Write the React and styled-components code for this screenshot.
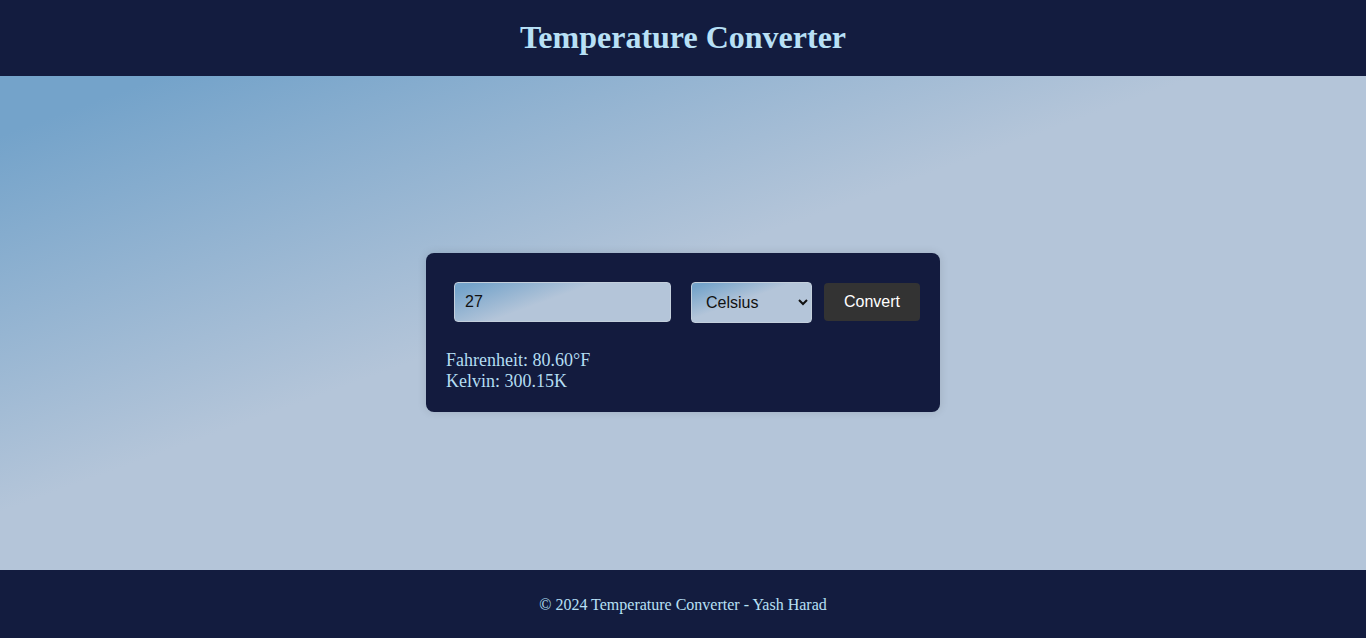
import React, { useState } from "react";
import styled, { createGlobalStyle } from "styled-components";

const bgGradient = "linear-gradient(160deg, #74a3ca 6%, #b4c5d9 44%, #b4c5d9 100%)";

const Global = createGlobalStyle`
  html, body { margin: 0; padding: 0; height: 100%; }
  body { font-family: "Liberation Serif", "Times New Roman", serif; background: #b4c5d9; }
  #root { height: 100%; }
`;

const Page = styled.div`
  display: flex;
  flex-direction: column;
  height: 638px;
`;

const Header = styled.header`
  height: 76px;
  flex: none;
  background: #131c3f;
  display: flex;
  align-items: center;
  justify-content: center;
`;

const Title = styled.h1`
  margin: 0 0 2px;
  font-size: 32px;
  font-weight: bold;
  color: #b8e0f6;
  font-family: "Liberation Serif", "Times New Roman", serif;
`;

const Main = styled.main`
  flex: 1;
  background: ${bgGradient};
  display: flex;
  align-items: center;
  justify-content: center;
  padding-top: 18px;
  box-sizing: border-box;
`;

const Card = styled.div`
  width: 514px;
  box-sizing: border-box;
  background: #131b3e;
  border-radius: 8px;
  padding: 20px;
  box-shadow: 0 0 10px rgba(0, 0, 0, 0.12);
`;

const Row = styled.div`
  display: flex;
  align-items: center;
  padding: 9px 0 7px 8px;
`;

const Field = styled.input`
  width: 217px;
  height: 40px;
  box-sizing: border-box;
  border: 1px solid #c3cfdc;
  border-radius: 4px;
  background: ${bgGradient};
  padding: 0 10px;
  font-family: "Liberation Sans", Arial, sans-serif;
  font-size: 16px;
  color: #111;
  outline: none;
`;

const Select = styled.select`
  margin-left: 20px;
  width: 121px;
  height: 41px;
  box-sizing: border-box;
  border: 1px solid #c3cfdc;
  border-radius: 4px;
  background: ${bgGradient};
  padding: 0 10px;
  font-family: "Liberation Sans", Arial, sans-serif;
  font-size: 16px;
  color: #111;
`;

const Button = styled.button`
  margin-left: 12px;
  width: 96px;
  height: 38px;
  border: none;
  border-radius: 4px;
  background: #333333;
  color: #fff;
  font-family: "Liberation Sans", Arial, sans-serif;
  font-size: 16px;
  cursor: pointer;
`;

const Results = styled.div`
  margin-top: 20px;
  color: #b3ddf2;
  font-size: 18px;
  line-height: 21px;
`;

const Footer = styled.footer`
  height: 68px;
  flex: none;
  background: #131c3f;
  display: flex;
  align-items: center;
  justify-content: center;
  color: #b8e0f6;
  font-size: 16px;
  padding-top: 2px;
  box-sizing: border-box;
`;

export default function App() {
  const [value, setValue] = useState("27");
  const [unit, setUnit] = useState("celsius");
  return (
    <>
      <Global />
      <Page>
        <Header>
          <Title>Temperature Converter</Title>
        </Header>
        <Main>
          <Card>
            <Row>
              <Field value={value} onChange={(e) => setValue(e.target.value)} />
              <Select value={unit} onChange={(e) => setUnit(e.target.value)}>
                <option value="celsius">Celsius</option>
                <option value="fahrenheit">Fahrenheit</option>
                <option value="kelvin">Kelvin</option>
              </Select>
              <Button>Convert</Button>
            </Row>
            <Results>
              <div>Fahrenheit: 80.60°F</div>
              <div>Kelvin: 300.15K</div>
            </Results>
          </Card>
        </Main>
        <Footer>© 2024 Temperature Converter - Yash Harad</Footer>
      </Page>
    </>
  );
}
